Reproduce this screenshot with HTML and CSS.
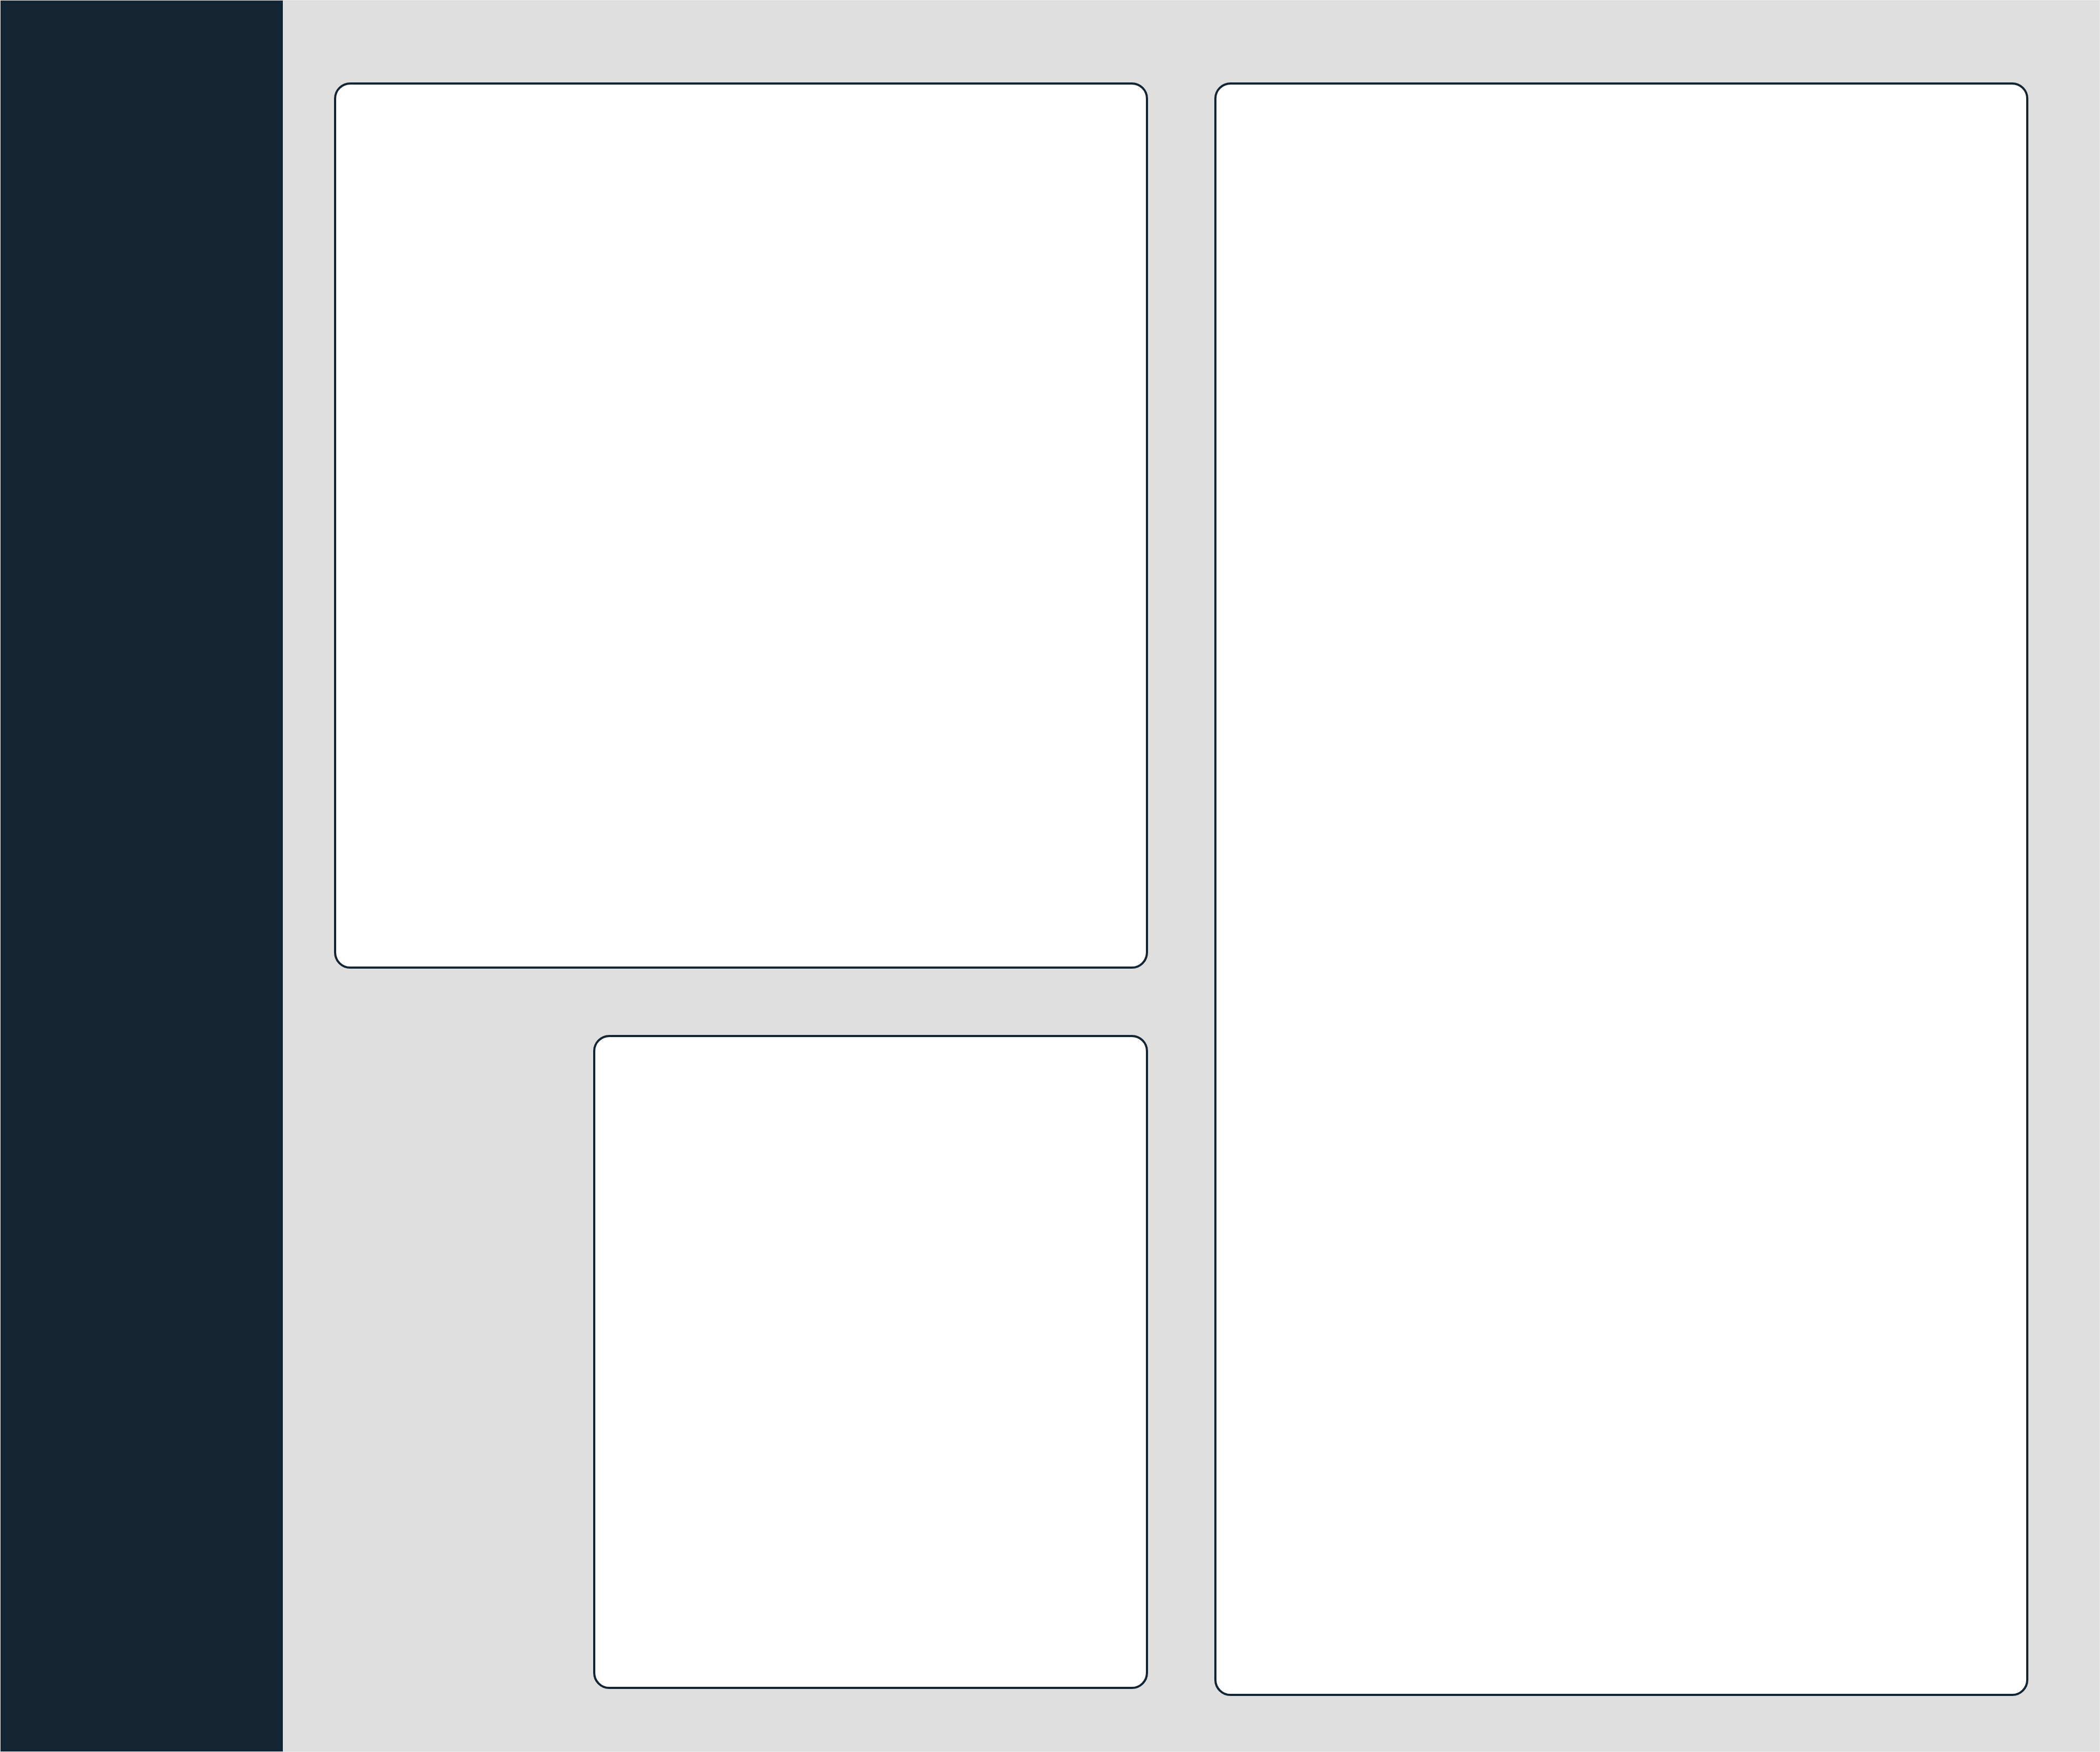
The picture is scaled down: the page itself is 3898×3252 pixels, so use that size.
FILE: index.html
```html
<!DOCTYPE html>
<html lang="en">
<head>
<meta charset="utf-8">
<title>Dashboard</title>
<link rel="stylesheet" href="styles.css">
</head>
<body>
<div class="app">
  <aside class="sidebar"></aside>
  <main class="main">
    <div class="col-left">
      <section class="card card-top"></section>
      <section class="card card-small"></section>
    </div>
    <section class="card card-tall"></section>
  </main>
</div>
</body>
</html>
```

FILE: styles.css
```css
html, body {
  margin: 0;
  padding: 0;
}
body {
  background: #dfdfdf;
  font-family: "Liberation Sans", Arial, sans-serif;
}
.app {
  display: flex;
  width: 3898px;
  height: 3252px;
  box-sizing: border-box;
  border: 1px solid rgba(255, 255, 255, 0.3);
  background: #dfdfdf;
}
.sidebar {
  width: 524px;
  flex: 0 0 524px;
  background: #132433;
}
.main {
  flex: 1;
  display: grid;
  grid-template-columns: 1511px 1511px;
  column-gap: 123px;
  align-items: start;
  padding: 152px 0 0 95px;
}
.col-left {
  display: flex;
  flex-direction: column;
  align-items: flex-end;
  gap: 123px;
}
.card {
  box-sizing: border-box;
  background: #ffffff;
  border: 4px solid #132433;
  border-radius: 30px;
}
.card-top {
  width: 1511px;
  height: 1645px;
}
.card-small {
  width: 1030px;
  height: 1214px;
}
.card-tall {
  width: 1511px;
  height: 2995px;
}
```
